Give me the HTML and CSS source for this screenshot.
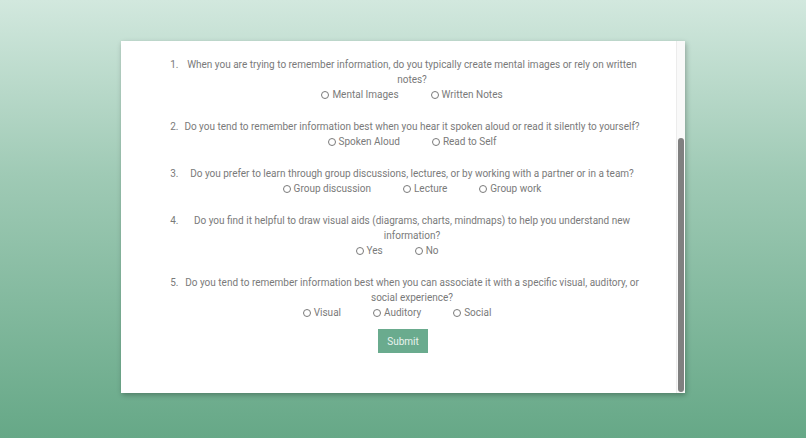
FILE: index.html
```html
<!DOCTYPE html>
<html lang="en">
<head>
<meta charset="utf-8">
<title>Learning Style Quiz</title>
<link rel="stylesheet" href="styles.css">
</head>
<body>
<div class="card">
  <form class="content">
    <ol class="questions">
      <li>
        <p class="q">When you are trying to remember information, do you typically create mental images or rely on written notes?</p>
        <div class="options">
          <label><input type="radio" name="q1"> Mental Images</label>
          <label><input type="radio" name="q1"> Written Notes</label>
        </div>
      </li>
      <li>
        <p class="q">Do you tend to remember information best when you hear it spoken aloud or read it silently to yourself?</p>
        <div class="options">
          <label><input type="radio" name="q2"> Spoken Aloud</label>
          <label><input type="radio" name="q2"> Read to Self</label>
        </div>
      </li>
      <li>
        <p class="q">Do you prefer to learn through group discussions, lectures, or by working with a partner or in a team?</p>
        <div class="options">
          <label><input type="radio" name="q3"> Group discussion</label>
          <label><input type="radio" name="q3"> Lecture</label>
          <label><input type="radio" name="q3"> Group work</label>
        </div>
      </li>
      <li>
        <p class="q">Do you find it helpful to draw visual aids (diagrams, charts, mindmaps) to help you understand new information?</p>
        <div class="options options--trailing">
          <label><input type="radio" name="q4"> Yes</label>
          <label><input type="radio" name="q4"> No</label>
        </div>
      </li>
      <li>
        <p class="q">Do you tend to remember information best when you can associate it with a specific visual, auditory, or social experience?</p>
        <div class="options options--trailing">
          <label><input type="radio" name="q5"> Visual</label>
          <label><input type="radio" name="q5"> Auditory</label>
          <label><input type="radio" name="q5"> Social</label>
        </div>
      </li>
    </ol>
    <div class="submit-row">
      <button type="button" class="submit">Submit</button>
    </div>
  </form>
  <div class="scrollbar"><div class="thumb"></div></div>
</div>
</body>
</html>
```
FILE: styles.css
```css
html, body {
  margin: 0;
  height: 438px;
  overflow: hidden;
}
body {
  background: linear-gradient(180deg, #d2e8de 0%, #9fcab5 40%, #66a887 100%);
  font-family: Roboto, "Liberation Sans", sans-serif;
}
.card {
  width: 564px;
  height: 352px;
  margin: 41px auto 0;
  background: #fff;
  display: flex;
  box-shadow: 1px 2px 5px rgba(0, 0, 0, 0.28);
}
.content {
  flex: 1;
  padding: 16px 33px 0 20px;
  margin: 0;
}
.questions {
  margin: 0;
  padding-left: 40px;
  color: #7a7a7a;
  font-size: 10px;
  line-height: 15px;
}
.questions li {
  text-align: center;
  margin-bottom: 17px;
}
.questions li:last-child {
  margin-bottom: 9px;
}
.q {
  margin: 0;
}
.options {
  display: flex;
  justify-content: center;
  gap: 32px;
}
.options--trailing {
  padding-right: 30px;
}
.options label {
  display: inline-flex;
  align-items: center;
  gap: 3px;
}
.options input {
  appearance: none;
  -webkit-appearance: none;
  width: 8px;
  height: 8px;
  margin: 0;
  border: 1px solid #7a7a7a;
  border-radius: 50%;
  background: #fff;
}
.submit-row {
  display: flex;
  justify-content: center;
  padding-left: 22px;
}
.submit {
  width: 50px;
  height: 24px;
  border: none;
  background: #6aab8e;
  color: #e9f3ee;
  font-family: Roboto, "Liberation Sans", sans-serif;
  font-size: 10px;
  padding: 0;
}
.scrollbar {
  width: 8px;
  background: #f9f9f9;
  border-left: 1px solid #ececec;
  display: flex;
  flex-direction: column;
  justify-content: flex-end;
  align-items: center;
  padding-bottom: 1px;
}
.thumb {
  width: 6px;
  height: 254px;
  border-radius: 3px;
  background: #808080;
}
```
